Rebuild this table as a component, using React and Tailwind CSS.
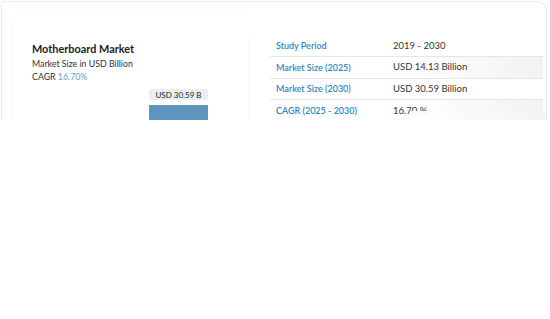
import React from 'react';

const rows = [
  { label: 'Study Period', value: '2019 - 2030', shade: false },
  { label: 'Market Size (2025)', value: 'USD 14.13 Billion', shade: true },
  { label: 'Market Size (2030)', value: 'USD 30.59 Billion', shade: false },
  { label: 'CAGR (2025 - 2030)', value: '16.70 %', shade: true },
];

const App = () => {
  return (
    <div className="w-[550px] h-[319px] bg-white overflow-hidden" style={{ fontFamily: 'Lato, "Open Sans", sans-serif' }}>
      <div className="ml-[1px] mt-[1px] w-[546px] h-[119px] border-t border-l border-r border-[#ececec] rounded-tr-[10px] rounded-tl-[4px] overflow-hidden flex relative">
        {/* left summary */}
        <div className="w-[246px] shrink-0 pt-[11px] pl-[9px]">
          <div className="h-[120px] rounded-tl-[12px] border-t border-l border-[#f9f9f9] pl-[20px] pt-[28px]">
            <h2 className="text-[10.9px] font-bold text-[#1c1c1c] leading-[14px]">Motherboard Market</h2>
            <p className="text-[8.8px] text-[#333] leading-[13px] mt-[1px]">Market Size in USD Billion</p>
            <p className="text-[8.8px] text-[#333] leading-[13px]">
              CAGR <span className="text-[#6b9ec6]">16.70%</span>
            </p>
            <div className="ml-[117px] mt-[6px] w-[59px] flex flex-col items-center">
              <div className="relative w-[59px] h-[11px] bg-[#e9eef1] rounded-[2px] flex items-center justify-center">
                <span className="text-[8px] text-[#222] leading-none">USD 30.59 B</span>
                <span className="absolute left-1/2 -bottom-[3px] -ml-[3px] w-0 h-0 border-l-[3px] border-r-[3px] border-t-[3px] border-l-transparent border-r-transparent border-t-[#e9eef1]" />
              </div>
              <div className="mt-[5px] w-[59px] h-[20px] bg-[#5d95bc]" />
            </div>
          </div>
        </div>
        {/* table */}
        <div className="flex-1 pt-[34px] pl-[21px] pr-[3px]">
          <div className="border-l border-[#fafafa] -ml-[21px] pl-[21px] h-[90px]">
            {rows.map((r, i) => (
              <div
                key={r.label}
                className={`h-[21.4px] flex items-center ${i < 3 ? 'border-b border-[#e6e6e6]' : ''} ${r.shade ? 'bg-gradient-to-r from-white via-white to-[#f2f2f2]' : ''}`}
              >
                <span className="w-[123px] pl-[6px] text-[9px] font-semibold text-[#2b8ac3]">{r.label}</span>
                <span className="text-[9.5px] text-[#333]">{r.value}</span>
              </div>
            ))}
          </div>
        </div>
        <div className="absolute left-[409px] top-[109px] w-[140px] h-[10px] bg-gradient-to-r from-white/90 to-[#f4f4f4]" />
      </div>
    </div>
  );
};

export default App;
